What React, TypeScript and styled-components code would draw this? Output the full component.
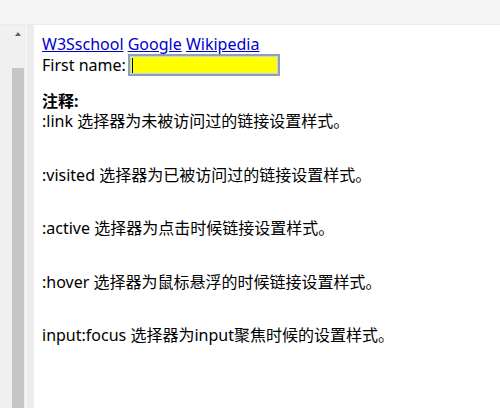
import styled, { createGlobalStyle } from 'styled-components'

const GlobalStyle = createGlobalStyle`
    html, body {
        margin: 0;
        padding: 0;
        background: #fff;
    }
    body {
        font-family: "Segoe UI", "Noto Sans", "Noto Sans CJK SC", sans-serif;
        font-size: 16px;
        color: #000;
    }
`;

const notes = [
    ':visited 选择器为已被访问过的链接设置样式。',
    ':active 选择器为点击时候链接设置样式。',
    ':hover 选择器为鼠标悬浮的时候链接设置样式。',
    'input:focus 选择器为input聚焦时候的设置样式。',
]

const App = () => {
    return (
        <Page>
            <GlobalStyle />
            <TopBar />
            <Body>
                <ScrollTrack>
                    <ArrowUp />
                    <Thumb />
                </ScrollTrack>
                <Divider />
                <Content>
                    <LinkRow>
                        <Link href="#">W3Sschool</Link> <Link href="#">Google</Link> <Link href="#">Wikipedia</Link>
                    </LinkRow>
                    <NameRow>
                        First name:<Field><Caret /></Field>
                    </NameRow>
                    <Note>
                        <Line><b>注释:</b></Line>
                        <Line>:link 选择器为未被访问过的链接设置样式。</Line>
                    </Note>
                    {notes.map((n) => (
                        <Para key={n}>{n}</Para>
                    ))}
                </Content>
            </Body>
        </Page>
    )
}

const Page = styled.div`
    width: 500px;
    height: 408px;
    overflow: hidden;
    display: flex;
    flex-direction: column;
`;
const TopBar = styled.div`
    height: 24px;
    background: #f5f5f5;
    border-bottom: 1px solid #ebebeb;
    flex-shrink: 0;
`;
const Body = styled.div`
    flex: 1;
    display: flex;
`;
const ScrollTrack = styled.div`
    width: 26px;
    background: #f0f0f0;
    display: flex;
    flex-direction: column;
    align-items: flex-end;
    padding-right: 2px;
    box-sizing: border-box;
`;
const ArrowUp = styled.div`
    width: 0;
    height: 0;
    margin: 7px 3px 0 0;
    border-left: 3.5px solid transparent;
    border-right: 3.5px solid transparent;
    border-bottom: 4px solid #606060;
`;
const Thumb = styled.div`
    width: 12px;
    flex: 1;
    margin-top: 32px;
    background: #c6c6c6;
`;
const Divider = styled.div`
    width: 8px;
    border-left: 1px solid #fbfbfb;
    background: #ececec;
    box-sizing: border-box;
`;
const Content = styled.div`
    flex: 1;
    padding: 9px 8px 0 8px;
    background: #fff;
`;
const LinkRow = styled.div`
    line-height: 20px;
`;
const Link = styled.a`
    color: #0000cc;
    text-decoration: underline;
`;
const NameRow = styled.div`
    display: flex;
    align-items: center;
    height: 22px;
    white-space: nowrap;
`;
const Field = styled.div`
    width: 146px;
    height: 18px;
    margin-left: 2px;
    background: #ffff00;
    border: 2px solid #8f9fbf;
    box-shadow: inset 0 0 0 1px #c8d2e6;
    display: flex;
    align-items: center;
    padding-left: 2px;
`;
const Caret = styled.span`
    width: 1px;
    height: 15px;
    background: #000;
`;
const Note = styled.div`
    margin-top: 15px;
`;
const Line = styled.div`
    height: 20px;
    line-height: 20px;
    white-space: nowrap;
`;
const Para = styled.div`
    margin-top: 33.5px;
    height: 20px;
    line-height: 20px;
    white-space: nowrap;
`;

export default App
